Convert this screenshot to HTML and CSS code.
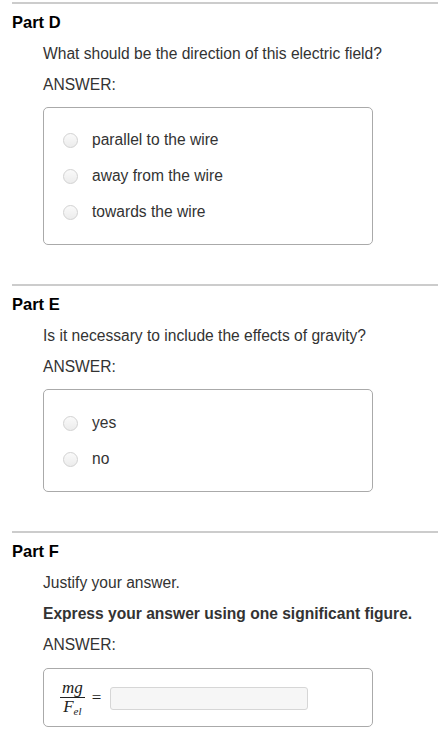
FILE: index.html
```html
<!DOCTYPE html>
<html lang="en">
<head>
  <meta charset="UTF-8">
  <meta name="viewport" content="width=device-width, initial-scale=1">
  <title>Parts D - F</title>
  <link rel="stylesheet" href="styles.css">
</head>
<body>

<!-- Part D -->
<div class="part">
  <h2 class="part-title">Part D</h2>
  <div class="part-body">
    <p class="prompt">What should be the direction of this electric field?</p>
    <p class="answer-label">ANSWER:</p>
    <div class="answer-box">
      <label class="choice"><span class="radio"></span>parallel to the wire</label>
      <label class="choice"><span class="radio"></span>away from the wire</label>
      <label class="choice"><span class="radio"></span>towards the wire</label>
    </div>
  </div>
</div>

<!-- Part E -->
<div class="part">
  <h2 class="part-title">Part E</h2>
  <div class="part-body">
    <p class="prompt">Is it necessary to include the effects of gravity?</p>
    <p class="answer-label">ANSWER:</p>
    <div class="answer-box short">
      <label class="choice"><span class="radio"></span>yes</label>
      <label class="choice"><span class="radio"></span>no</label>
    </div>
  </div>
</div>

<!-- Part F -->
<div class="part">
  <h2 class="part-title">Part F</h2>
  <div class="part-body">
    <p class="prompt">Justify your answer.</p>
    <p class="prompt-strong">Express your answer using one significant figure.</p>
    <p class="answer-label">ANSWER:</p>
    <div class="answer-box formula">
      <span class="frac">
        <span class="num">mg</span>
        <span class="den">F<sub>el</sub></span>
      </span>
      <span class="equals">=</span>
      <input class="answer-input" type="text">
    </div>
  </div>
</div>

</body>
</html>
```

FILE: styles.css
```css
body {
  margin: 0;
  padding-top: 2px;
  background: #fff;
  font-family: "Liberation Sans", Arial, sans-serif;
  color: #333;
}

.part {
  margin: 0 0 39px 12px;
  border-top: 2px solid #ccc;
}

.part-title {
  margin: 0;
  padding-top: 8px;
  font-size: 16.5px;
  line-height: 20px;
  font-weight: bold;
  color: #000;
}

.part-body {
  padding-left: 31px;
}

.prompt,
.prompt-strong,
.answer-label {
  margin: 11px 0 0;
  font-size: 15.6px;
  line-height: 20px;
}

.prompt {
  margin-top: 12px;
}

.prompt-strong {
  font-weight: bold;
}

.answer-box {
  box-sizing: border-box;
  width: 330px;
  margin-top: 12px;
  padding: 14px 0;
  border: 1px solid #aaa;
  border-radius: 5px;
}

.answer-box.short {
  padding: 15px 0 14px;
}

.choice {
  display: flex;
  align-items: center;
  height: 36px;
  padding-left: 19px;
  font-size: 15.6px;
  color: #333;
}

.radio {
  box-sizing: border-box;
  width: 15px;
  height: 15px;
  margin-right: 14px;
  border: 1px solid #d2d2d2;
  border-radius: 50%;
  background: linear-gradient(#fafafa, #ececec);
}

.answer-box.formula {
  display: flex;
  align-items: center;
  height: 59px;
  margin-top: 13px;
  padding: 0 0 0 16px;
}

.frac {
  display: inline-flex;
  flex-direction: column;
  align-items: center;
  font-family: "Liberation Serif", "Times New Roman", serif;
  font-style: italic;
  font-size: 17px;
  color: #222;
}

.frac .num {
  line-height: 13px;
  padding: 0 2px 3px;
  border-bottom: 1.5px solid #222;
}

.frac .den {
  line-height: 16px;
  padding-top: 1px;
}

.frac sub {
  font-size: 11px;
  vertical-align: -3px;
  line-height: 0;
}

.equals {
  margin: 0 9px 0 7px;
  font-family: "Liberation Serif", "Times New Roman", serif;
  font-size: 17px;
  color: #222;
}

.answer-input {
  box-sizing: border-box;
  width: 198px;
  height: 23px;
  margin: 1px 0 0;
  padding: 0 4px;
  border: 1px solid #d6d6d6;
  border-radius: 3px;
  background: #f6f6f6;
}
```
